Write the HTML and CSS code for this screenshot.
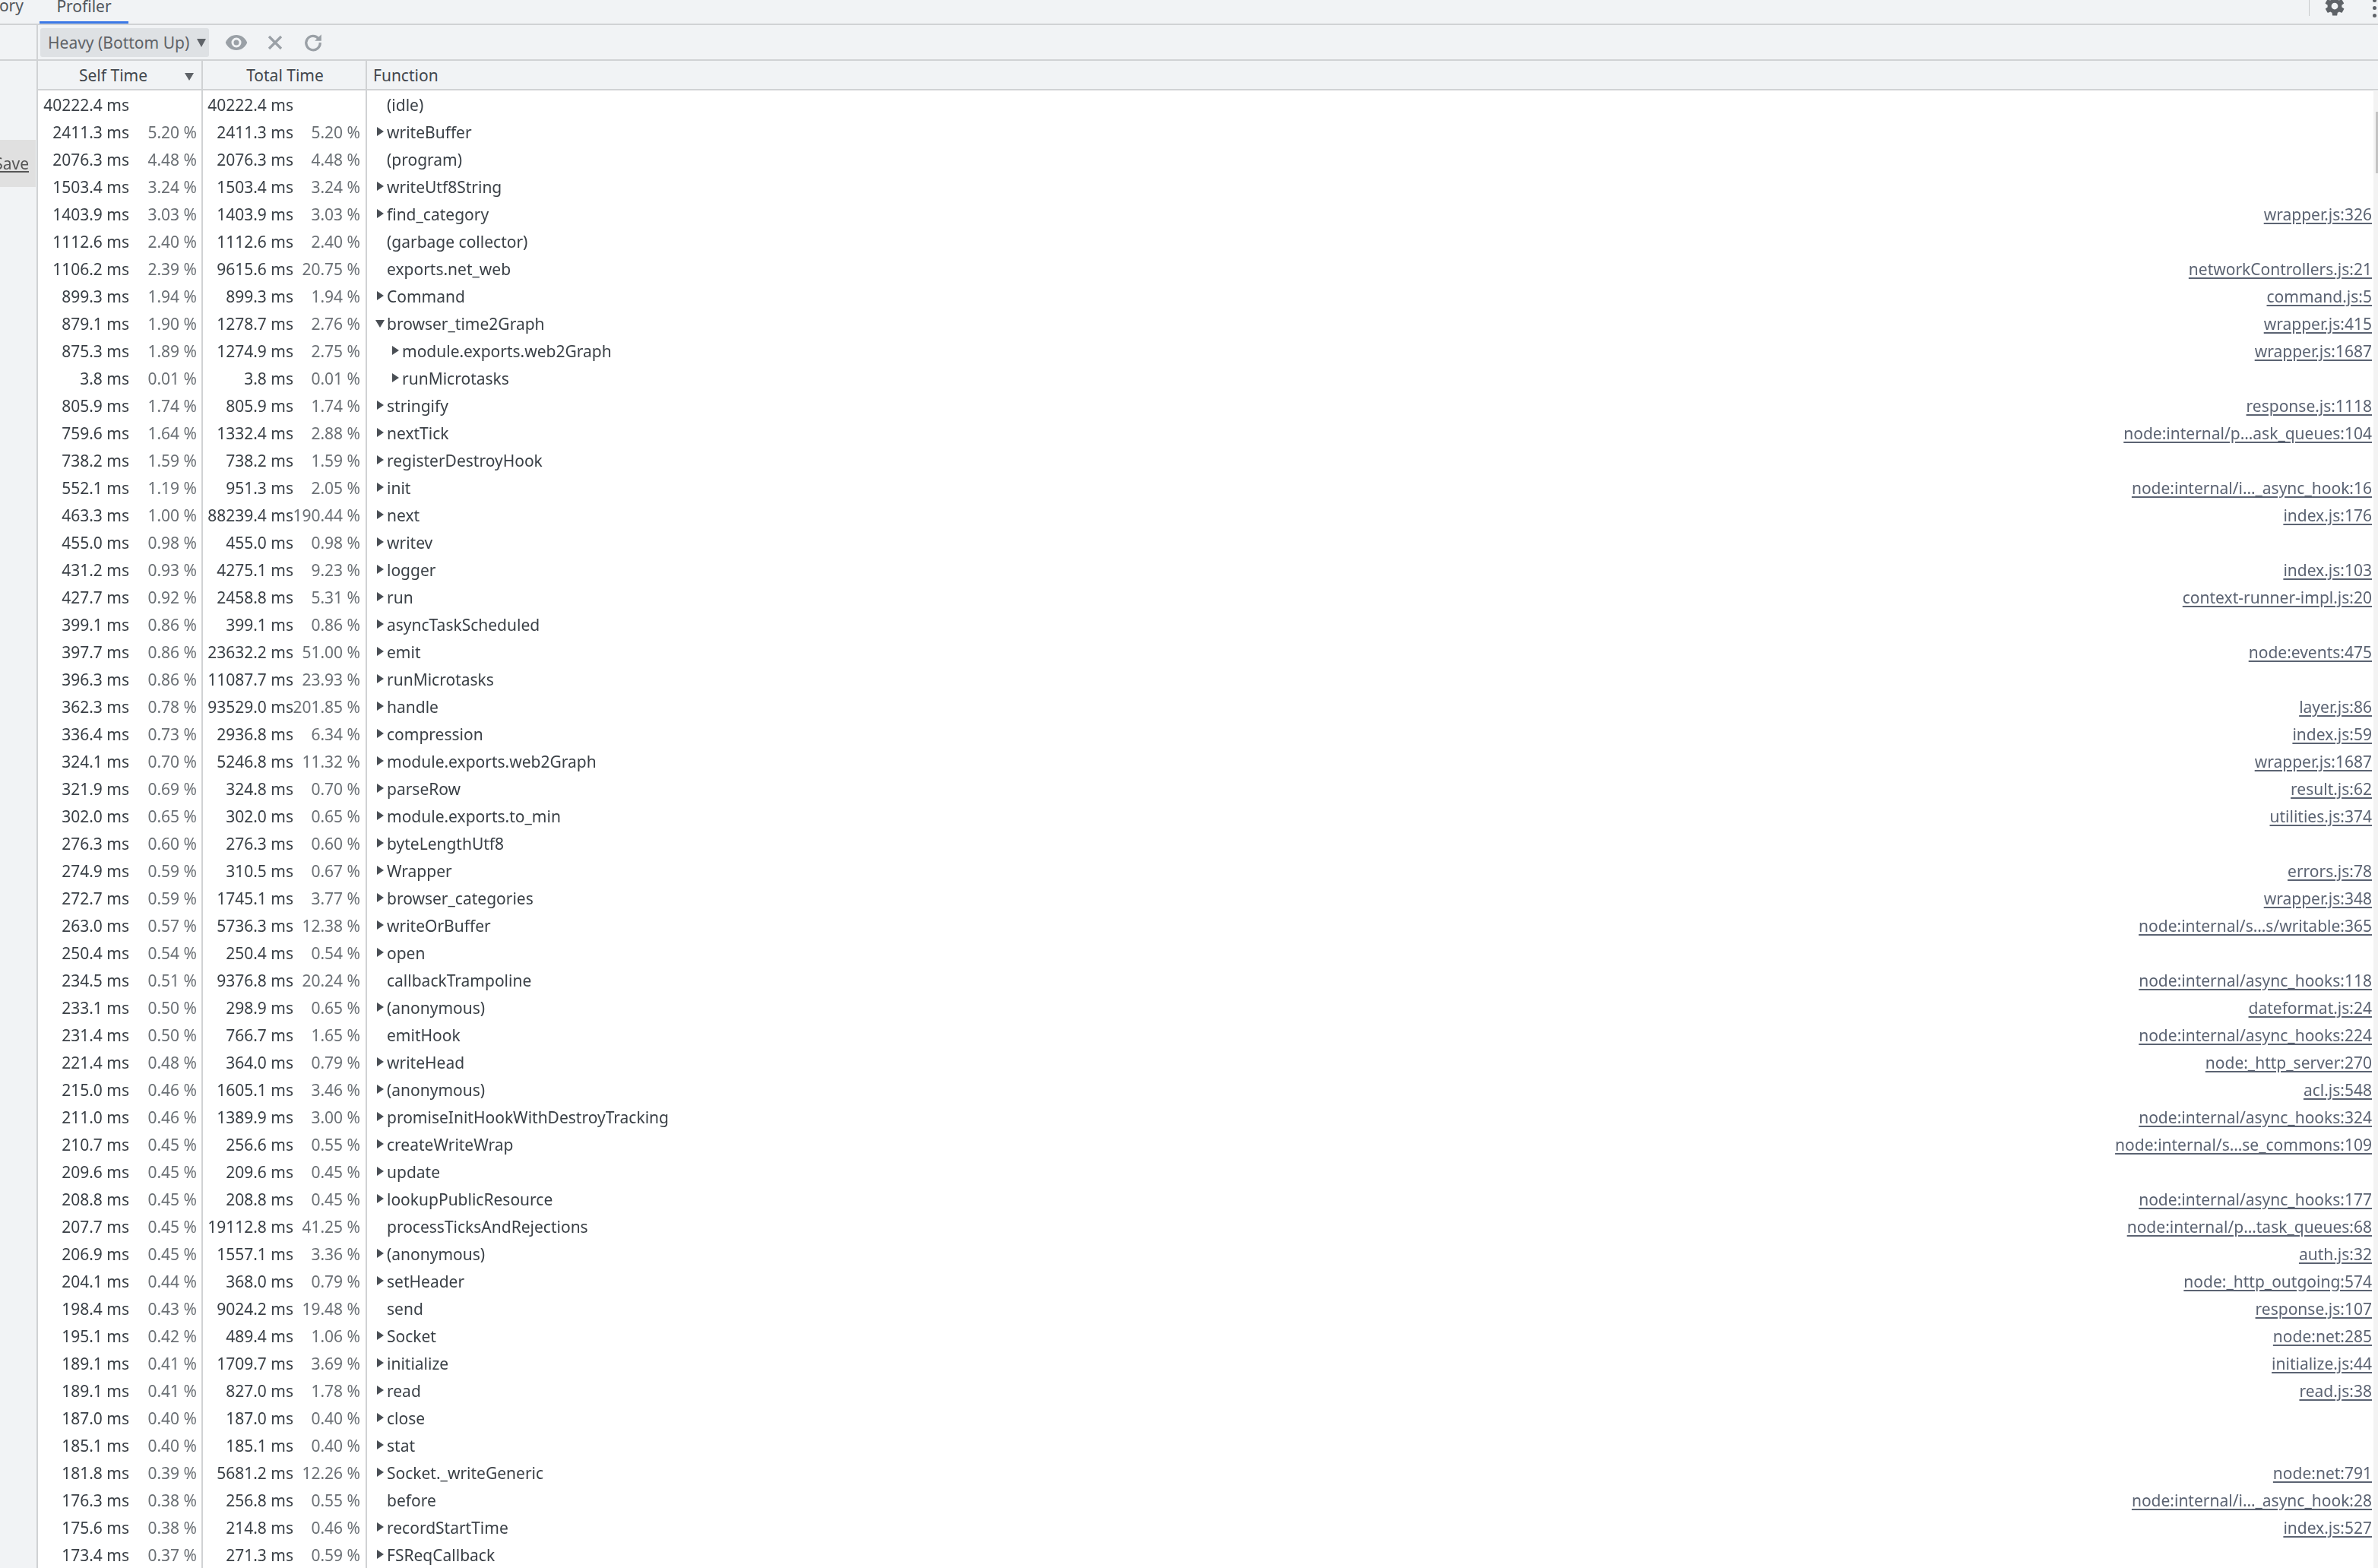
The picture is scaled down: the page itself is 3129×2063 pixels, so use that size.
FILE: index.html
```html
<!DOCTYPE html>
<html lang="en">
<head>
<meta charset="utf-8">
<title>Profiler</title>
<link rel="stylesheet" href="styles.css">
</head>
<body>
<div class="app">
  <header class="tabbar">
    <div class="tab-clip"><span>Memory</span></div>
    <div class="tab-active">Profiler</div>
    <div class="tab-tools">
      <span class="vsep"></span>
      <svg class="gear" viewBox="0 0 24 24" width="30" height="30"><path fill="#5f6368" d="M19.4 13c.1-.3.1-.7.1-1s0-.7-.1-1l2.1-1.6c.2-.2.2-.4.1-.6l-2-3.5c-.1-.2-.4-.3-.6-.2l-2.5 1c-.5-.4-1.100-.7-1.700-1l-.4-2.600c0-.3-.2-.4-.5-.4h-4c-.3 0-.5.1-.5.4l-.4 2.600c-.6.3-1.200.6-1.700 1l-2.500-1c-.2-.1-.5 0-.6.2l-2 3.500c-.1.2-.1.4.1.6L4.600 11c-.1.3-.1.7-.1 1s0 .7.1 1l-2.100 1.600c-.2.2-.2.4-.1.6l2 3.500c.1.2.4.3.6.2l2.500-1c.5.4 1.100.7 1.700 1l.4 2.600c0 .3.2.4.5.4h4c.3 0 .5-.1.5-.4l.4-2.600c.6-.3 1.200-.6 1.700-1l2.500 1c.2.1.5 0 .6-.2l2-3.500c.1-.2.1-.4-.1-.6L19.400 13zM12 15.500a3.500 3.500 0 1 1 0-7 3.500 3.500 0 0 1 0 7z"/></svg>
      <span class="dots"><i></i><i></i><i></i></span>
    </div>
  </header>
  <div class="body">
    <aside class="side">
      <div class="side-top"></div>
      <div class="save"><span class="save-clip"><u>Save</u></span></div>
    </aside>
    <main class="main">
      <div class="toolbar">
        <div class="select"><span>Heavy (Bottom Up)</span><b class="sel-arrow"></b></div>
        <svg class="tool eye" viewBox="0 0 30 22" width="30" height="22"><path fill="#9aa0a6" fill-rule="evenodd" d="M15 1C8.500 1 3 5 .8 11 3 17 8.500 21 15 21s12-4 14.200-10C27 5 21.500 1 15 1zm0 16.500a6.500 6.500 0 1 1 0-13 6.500 6.500 0 0 1 0 13zm0-10a3.500 3.500 0 1 0 0 7 3.500 3.500 0 0 0 0-7z"/></svg>
        <svg class="tool x" viewBox="0 0 20 20" width="20" height="20"><path stroke="#9aa0a6" stroke-width="3.200" d="M2 2l16 16M18 2L2 18"/></svg>
        <svg class="tool refresh" viewBox="0 0 24 24" width="26" height="26"><path fill="none" stroke="#9aa0a6" stroke-width="3" d="M18.500 7A8.500 8.500 0 1 0 20.500 12"/><path fill="#9aa0a6" d="M22 2v8h-8z"/></svg>
      </div>
      <div class="ghead">
        <div class="h1"><span>Self Time</span><b class="sort"></b></div>
        <div class="h2">Total Time</div>
        <div class="h3">Function</div>
      </div>
      <div class="grid">
        <div class="r"><div class="c"><span class="m">40222.4 ms</span><span class="p"></span></div><div class="c"><span class="m">40222.4 ms</span><span class="p"></span></div><div class="f"><span class="n">(idle)</span></div></div>
        <div class="r"><div class="c"><span class="m">2411.3 ms</span><span class="p">5.20 %</span></div><div class="c"><span class="m">2411.3 ms</span><span class="p">5.20 %</span></div><div class="f"><b class="t"></b><span class="n">writeBuffer</span></div></div>
        <div class="r"><div class="c"><span class="m">2076.3 ms</span><span class="p">4.48 %</span></div><div class="c"><span class="m">2076.3 ms</span><span class="p">4.48 %</span></div><div class="f"><span class="n">(program)</span></div></div>
        <div class="r"><div class="c"><span class="m">1503.4 ms</span><span class="p">3.24 %</span></div><div class="c"><span class="m">1503.4 ms</span><span class="p">3.24 %</span></div><div class="f"><b class="t"></b><span class="n">writeUtf8String</span></div></div>
        <div class="r"><div class="c"><span class="m">1403.9 ms</span><span class="p">3.03 %</span></div><div class="c"><span class="m">1403.9 ms</span><span class="p">3.03 %</span></div><div class="f"><b class="t"></b><span class="n">find_category</span><a class="u">wrapper.js:326</a></div></div>
        <div class="r"><div class="c"><span class="m">1112.6 ms</span><span class="p">2.40 %</span></div><div class="c"><span class="m">1112.6 ms</span><span class="p">2.40 %</span></div><div class="f"><span class="n">(garbage collector)</span></div></div>
        <div class="r"><div class="c"><span class="m">1106.2 ms</span><span class="p">2.39 %</span></div><div class="c"><span class="m">9615.6 ms</span><span class="p">20.75 %</span></div><div class="f"><span class="n">exports.net_web</span><a class="u">networkControllers.js:21</a></div></div>
        <div class="r"><div class="c"><span class="m">899.3 ms</span><span class="p">1.94 %</span></div><div class="c"><span class="m">899.3 ms</span><span class="p">1.94 %</span></div><div class="f"><b class="t"></b><span class="n">Command</span><a class="u">command.js:5</a></div></div>
        <div class="r"><div class="c"><span class="m">879.1 ms</span><span class="p">1.90 %</span></div><div class="c"><span class="m">1278.7 ms</span><span class="p">2.76 %</span></div><div class="f"><b class="d"></b><span class="n">browser_time2Graph</span><a class="u">wrapper.js:415</a></div></div>
        <div class="r"><div class="c"><span class="m">875.3 ms</span><span class="p">1.89 %</span></div><div class="c"><span class="m">1274.9 ms</span><span class="p">2.75 %</span></div><div class="f sub"><b class="t"></b><span class="n">module.exports.web2Graph</span><a class="u">wrapper.js:1687</a></div></div>
        <div class="r"><div class="c"><span class="m">3.8 ms</span><span class="p">0.01 %</span></div><div class="c"><span class="m">3.8 ms</span><span class="p">0.01 %</span></div><div class="f sub"><b class="t"></b><span class="n">runMicrotasks</span></div></div>
        <div class="r"><div class="c"><span class="m">805.9 ms</span><span class="p">1.74 %</span></div><div class="c"><span class="m">805.9 ms</span><span class="p">1.74 %</span></div><div class="f"><b class="t"></b><span class="n">stringify</span><a class="u">response.js:1118</a></div></div>
        <div class="r"><div class="c"><span class="m">759.6 ms</span><span class="p">1.64 %</span></div><div class="c"><span class="m">1332.4 ms</span><span class="p">2.88 %</span></div><div class="f"><b class="t"></b><span class="n">nextTick</span><a class="u">node:internal/p…ask_queues:104</a></div></div>
        <div class="r"><div class="c"><span class="m">738.2 ms</span><span class="p">1.59 %</span></div><div class="c"><span class="m">738.2 ms</span><span class="p">1.59 %</span></div><div class="f"><b class="t"></b><span class="n">registerDestroyHook</span></div></div>
        <div class="r"><div class="c"><span class="m">552.1 ms</span><span class="p">1.19 %</span></div><div class="c"><span class="m">951.3 ms</span><span class="p">2.05 %</span></div><div class="f"><b class="t"></b><span class="n">init</span><a class="u">node:internal/i…_async_hook:16</a></div></div>
        <div class="r"><div class="c"><span class="m">463.3 ms</span><span class="p">1.00 %</span></div><div class="c"><span class="m">88239.4 ms</span><span class="p">190.44 %</span></div><div class="f"><b class="t"></b><span class="n">next</span><a class="u">index.js:176</a></div></div>
        <div class="r"><div class="c"><span class="m">455.0 ms</span><span class="p">0.98 %</span></div><div class="c"><span class="m">455.0 ms</span><span class="p">0.98 %</span></div><div class="f"><b class="t"></b><span class="n">writev</span></div></div>
        <div class="r"><div class="c"><span class="m">431.2 ms</span><span class="p">0.93 %</span></div><div class="c"><span class="m">4275.1 ms</span><span class="p">9.23 %</span></div><div class="f"><b class="t"></b><span class="n">logger</span><a class="u">index.js:103</a></div></div>
        <div class="r"><div class="c"><span class="m">427.7 ms</span><span class="p">0.92 %</span></div><div class="c"><span class="m">2458.8 ms</span><span class="p">5.31 %</span></div><div class="f"><b class="t"></b><span class="n">run</span><a class="u">context-runner-impl.js:20</a></div></div>
        <div class="r"><div class="c"><span class="m">399.1 ms</span><span class="p">0.86 %</span></div><div class="c"><span class="m">399.1 ms</span><span class="p">0.86 %</span></div><div class="f"><b class="t"></b><span class="n">asyncTaskScheduled</span></div></div>
        <div class="r"><div class="c"><span class="m">397.7 ms</span><span class="p">0.86 %</span></div><div class="c"><span class="m">23632.2 ms</span><span class="p">51.00 %</span></div><div class="f"><b class="t"></b><span class="n">emit</span><a class="u">node:events:475</a></div></div>
        <div class="r"><div class="c"><span class="m">396.3 ms</span><span class="p">0.86 %</span></div><div class="c"><span class="m">11087.7 ms</span><span class="p">23.93 %</span></div><div class="f"><b class="t"></b><span class="n">runMicrotasks</span></div></div>
        <div class="r"><div class="c"><span class="m">362.3 ms</span><span class="p">0.78 %</span></div><div class="c"><span class="m">93529.0 ms</span><span class="p">201.85 %</span></div><div class="f"><b class="t"></b><span class="n">handle</span><a class="u">layer.js:86</a></div></div>
        <div class="r"><div class="c"><span class="m">336.4 ms</span><span class="p">0.73 %</span></div><div class="c"><span class="m">2936.8 ms</span><span class="p">6.34 %</span></div><div class="f"><b class="t"></b><span class="n">compression</span><a class="u">index.js:59</a></div></div>
        <div class="r"><div class="c"><span class="m">324.1 ms</span><span class="p">0.70 %</span></div><div class="c"><span class="m">5246.8 ms</span><span class="p">11.32 %</span></div><div class="f"><b class="t"></b><span class="n">module.exports.web2Graph</span><a class="u">wrapper.js:1687</a></div></div>
        <div class="r"><div class="c"><span class="m">321.9 ms</span><span class="p">0.69 %</span></div><div class="c"><span class="m">324.8 ms</span><span class="p">0.70 %</span></div><div class="f"><b class="t"></b><span class="n">parseRow</span><a class="u">result.js:62</a></div></div>
        <div class="r"><div class="c"><span class="m">302.0 ms</span><span class="p">0.65 %</span></div><div class="c"><span class="m">302.0 ms</span><span class="p">0.65 %</span></div><div class="f"><b class="t"></b><span class="n">module.exports.to_min</span><a class="u">utilities.js:374</a></div></div>
        <div class="r"><div class="c"><span class="m">276.3 ms</span><span class="p">0.60 %</span></div><div class="c"><span class="m">276.3 ms</span><span class="p">0.60 %</span></div><div class="f"><b class="t"></b><span class="n">byteLengthUtf8</span></div></div>
        <div class="r"><div class="c"><span class="m">274.9 ms</span><span class="p">0.59 %</span></div><div class="c"><span class="m">310.5 ms</span><span class="p">0.67 %</span></div><div class="f"><b class="t"></b><span class="n">Wrapper</span><a class="u">errors.js:78</a></div></div>
        <div class="r"><div class="c"><span class="m">272.7 ms</span><span class="p">0.59 %</span></div><div class="c"><span class="m">1745.1 ms</span><span class="p">3.77 %</span></div><div class="f"><b class="t"></b><span class="n">browser_categories</span><a class="u">wrapper.js:348</a></div></div>
        <div class="r"><div class="c"><span class="m">263.0 ms</span><span class="p">0.57 %</span></div><div class="c"><span class="m">5736.3 ms</span><span class="p">12.38 %</span></div><div class="f"><b class="t"></b><span class="n">writeOrBuffer</span><a class="u">node:internal/s…s/writable:365</a></div></div>
        <div class="r"><div class="c"><span class="m">250.4 ms</span><span class="p">0.54 %</span></div><div class="c"><span class="m">250.4 ms</span><span class="p">0.54 %</span></div><div class="f"><b class="t"></b><span class="n">open</span></div></div>
        <div class="r"><div class="c"><span class="m">234.5 ms</span><span class="p">0.51 %</span></div><div class="c"><span class="m">9376.8 ms</span><span class="p">20.24 %</span></div><div class="f"><span class="n">callbackTrampoline</span><a class="u">node:internal/async_hooks:118</a></div></div>
        <div class="r"><div class="c"><span class="m">233.1 ms</span><span class="p">0.50 %</span></div><div class="c"><span class="m">298.9 ms</span><span class="p">0.65 %</span></div><div class="f"><b class="t"></b><span class="n">(anonymous)</span><a class="u">dateformat.js:24</a></div></div>
        <div class="r"><div class="c"><span class="m">231.4 ms</span><span class="p">0.50 %</span></div><div class="c"><span class="m">766.7 ms</span><span class="p">1.65 %</span></div><div class="f"><span class="n">emitHook</span><a class="u">node:internal/async_hooks:224</a></div></div>
        <div class="r"><div class="c"><span class="m">221.4 ms</span><span class="p">0.48 %</span></div><div class="c"><span class="m">364.0 ms</span><span class="p">0.79 %</span></div><div class="f"><b class="t"></b><span class="n">writeHead</span><a class="u">node:_http_server:270</a></div></div>
        <div class="r"><div class="c"><span class="m">215.0 ms</span><span class="p">0.46 %</span></div><div class="c"><span class="m">1605.1 ms</span><span class="p">3.46 %</span></div><div class="f"><b class="t"></b><span class="n">(anonymous)</span><a class="u">acl.js:548</a></div></div>
        <div class="r"><div class="c"><span class="m">211.0 ms</span><span class="p">0.46 %</span></div><div class="c"><span class="m">1389.9 ms</span><span class="p">3.00 %</span></div><div class="f"><b class="t"></b><span class="n">promiseInitHookWithDestroyTracking</span><a class="u">node:internal/async_hooks:324</a></div></div>
        <div class="r"><div class="c"><span class="m">210.7 ms</span><span class="p">0.45 %</span></div><div class="c"><span class="m">256.6 ms</span><span class="p">0.55 %</span></div><div class="f"><b class="t"></b><span class="n">createWriteWrap</span><a class="u">node:internal/s…se_commons:109</a></div></div>
        <div class="r"><div class="c"><span class="m">209.6 ms</span><span class="p">0.45 %</span></div><div class="c"><span class="m">209.6 ms</span><span class="p">0.45 %</span></div><div class="f"><b class="t"></b><span class="n">update</span></div></div>
        <div class="r"><div class="c"><span class="m">208.8 ms</span><span class="p">0.45 %</span></div><div class="c"><span class="m">208.8 ms</span><span class="p">0.45 %</span></div><div class="f"><b class="t"></b><span class="n">lookupPublicResource</span><a class="u">node:internal/async_hooks:177</a></div></div>
        <div class="r"><div class="c"><span class="m">207.7 ms</span><span class="p">0.45 %</span></div><div class="c"><span class="m">19112.8 ms</span><span class="p">41.25 %</span></div><div class="f"><span class="n">processTicksAndRejections</span><a class="u">node:internal/p…task_queues:68</a></div></div>
        <div class="r"><div class="c"><span class="m">206.9 ms</span><span class="p">0.45 %</span></div><div class="c"><span class="m">1557.1 ms</span><span class="p">3.36 %</span></div><div class="f"><b class="t"></b><span class="n">(anonymous)</span><a class="u">auth.js:32</a></div></div>
        <div class="r"><div class="c"><span class="m">204.1 ms</span><span class="p">0.44 %</span></div><div class="c"><span class="m">368.0 ms</span><span class="p">0.79 %</span></div><div class="f"><b class="t"></b><span class="n">setHeader</span><a class="u">node:_http_outgoing:574</a></div></div>
        <div class="r"><div class="c"><span class="m">198.4 ms</span><span class="p">0.43 %</span></div><div class="c"><span class="m">9024.2 ms</span><span class="p">19.48 %</span></div><div class="f"><span class="n">send</span><a class="u">response.js:107</a></div></div>
        <div class="r"><div class="c"><span class="m">195.1 ms</span><span class="p">0.42 %</span></div><div class="c"><span class="m">489.4 ms</span><span class="p">1.06 %</span></div><div class="f"><b class="t"></b><span class="n">Socket</span><a class="u">node:net:285</a></div></div>
        <div class="r"><div class="c"><span class="m">189.1 ms</span><span class="p">0.41 %</span></div><div class="c"><span class="m">1709.7 ms</span><span class="p">3.69 %</span></div><div class="f"><b class="t"></b><span class="n">initialize</span><a class="u">initialize.js:44</a></div></div>
        <div class="r"><div class="c"><span class="m">189.1 ms</span><span class="p">0.41 %</span></div><div class="c"><span class="m">827.0 ms</span><span class="p">1.78 %</span></div><div class="f"><b class="t"></b><span class="n">read</span><a class="u">read.js:38</a></div></div>
        <div class="r"><div class="c"><span class="m">187.0 ms</span><span class="p">0.40 %</span></div><div class="c"><span class="m">187.0 ms</span><span class="p">0.40 %</span></div><div class="f"><b class="t"></b><span class="n">close</span></div></div>
        <div class="r"><div class="c"><span class="m">185.1 ms</span><span class="p">0.40 %</span></div><div class="c"><span class="m">185.1 ms</span><span class="p">0.40 %</span></div><div class="f"><b class="t"></b><span class="n">stat</span></div></div>
        <div class="r"><div class="c"><span class="m">181.8 ms</span><span class="p">0.39 %</span></div><div class="c"><span class="m">5681.2 ms</span><span class="p">12.26 %</span></div><div class="f"><b class="t"></b><span class="n">Socket._writeGeneric</span><a class="u">node:net:791</a></div></div>
        <div class="r"><div class="c"><span class="m">176.3 ms</span><span class="p">0.38 %</span></div><div class="c"><span class="m">256.8 ms</span><span class="p">0.55 %</span></div><div class="f"><span class="n">before</span><a class="u">node:internal/i…_async_hook:28</a></div></div>
        <div class="r"><div class="c"><span class="m">175.6 ms</span><span class="p">0.38 %</span></div><div class="c"><span class="m">214.8 ms</span><span class="p">0.46 %</span></div><div class="f"><b class="t"></b><span class="n">recordStartTime</span><a class="u">index.js:527</a></div></div>
        <div class="r"><div class="c"><span class="m">173.4 ms</span><span class="p">0.37 %</span></div><div class="c"><span class="m">271.3 ms</span><span class="p">0.59 %</span></div><div class="f"><b class="t"></b><span class="n">FSReqCallback</span></div></div>
      </div>
      <div class="scrollbar"><div class="thumb"></div></div>
    </main>
  </div>
</div>
</body>
</html>
```
FILE: styles.css
```css
* { box-sizing: border-box; }
html, body { margin: 0; height: 100%; overflow: hidden; background: #fff; }
body { font: 21px/36px "Noto Sans", "Open Sans", sans-serif; color: #3a4046; }
.app { height: 2063px; display: flex; flex-direction: column; overflow: hidden; filter: blur(0.45px); }

.tabbar { height: 33px; flex: none; display: flex; background: #f1f3f5; border-bottom: 2px solid #d0d2d4; overflow: hidden; color: #50555b; }
.tab-clip { width: 31px; flex: none; display: flex; justify-content: flex-end; overflow: hidden; margin-top: -11px; height: 44px; }
.tab-active { margin-left: 21px; width: 117px; height: 31px; text-align: center; line-height: 16px; border-bottom: 3px solid #3b78e7; }
.tab-tools { margin-left: auto; display: flex; align-items: flex-start; height: 31px; }
.vsep { width: 1px; height: 21px; background: #c9cbcd; margin-right: 18px; }
.gear { margin-top: -7px; margin-right: 35px; }
.dots { display: flex; flex-direction: column; gap: 5px; margin-top: -2px; margin-right: 2px; }
.dots i { width: 5px; height: 5px; border-radius: 50%; background: #5f6368; display: block; }

.body { flex: 1; min-height: 0; display: flex; }
.side { width: 48px; flex: none; background: #f1f3f5; }
.side-top { height: 47px; border-bottom: 2px solid #d0d2d4; }
.save { margin-top: 104px; height: 62px; width: 47px; background: #e0e0e0; display: flex; align-items: center; }
.save-clip { width: 38px; overflow: hidden; display: flex; justify-content: flex-end; color: #555; line-height: 36px; }

.main { flex: 1; min-width: 0; display: flex; flex-direction: column; border-left: 2px solid #d0d2d4; position: relative; }
.toolbar { height: 47px; flex: none; background: #f1f3f5; border-bottom: 2px solid #d0d2d4; display: flex; align-items: center; padding-left: 3px; }
.select { width: 222px; height: 38px; margin-top: 1px; background: #dee1e4; border-radius: 3px; display: flex; align-items: center; padding-left: 10px; color: #5f6368; white-space: nowrap; }
.sel-arrow { width: 0; height: 0; margin-left: 10px; border-left: 6px solid transparent; border-right: 6px solid transparent; border-top: 11px solid #5f6368; flex: none; }
.tool { flex: none; }
.eye { margin-left: 21px; }
.x { margin-left: 26px; }
.refresh { margin-left: 27px; }

.ghead { height: 39px; flex: none; display: flex; background: #f1f3f5; border-bottom: 2px solid #d0d2d4; line-height: 39px; color: #42474d; }
.h1 { width: 217px; flex: none; border-right: 2px solid #d0d2d4; display: flex; padding-left: 54px; position: relative; }
.sort { position: absolute; left: 193px; top: 16px; width: 0; height: 0; border-left: 6px solid transparent; border-right: 6px solid transparent; border-top: 10px solid #5f6368; }
.h2 { width: 216px; flex: none; border-right: 2px solid #d0d2d4; text-align: center; padding-left: 2px; }
.h3 { padding-left: 8px; }

.grid { flex: 1; min-height: 0; overflow: hidden; }
.r { height: 36px; display: flex; white-space: nowrap; line-height: 39px; }
.c { width: 217px; flex: none; display: flex; border-right: 2px solid #d0d2d4; }
.c + .c { width: 216px; }
.m { width: 120px; flex: none; text-align: right; }
.c + .c .m { width: 119px; }
.p { width: 90px; flex: none; text-align: right; color: #6b7075; margin-left: auto; position: relative; left: -6px; }
.c + .c .p { left: -7px; }

.f { flex: 1; min-width: 0; display: flex; align-items: flex-start; padding-left: 26px; padding-right: 8px; position: relative; }
.f.sub { padding-left: 46px; }
.t { position: absolute; left: 13px; top: 12px; width: 0; height: 0; border-top: 6.5px solid transparent; border-bottom: 6.5px solid transparent; border-left: 9px solid #4a4f55; }
.sub .t { left: 33px; }
.d { position: absolute; left: 11px; top: 14px; width: 0; height: 0; border-left: 6.5px solid transparent; border-right: 6.5px solid transparent; border-top: 10px solid #4a4f55; }
.n { flex: none; }
.u { margin-left: auto; color: #5b6372; text-decoration: underline; text-underline-offset: 3px; }

.scrollbar { position: absolute; right: 0; top: 87px; bottom: 0; width: 6px; background: #f3f3f3; }
.thumb { position: absolute; right: 0; top: 27px; width: 3px; height: 81px; background: #c4c4c4; }
```
